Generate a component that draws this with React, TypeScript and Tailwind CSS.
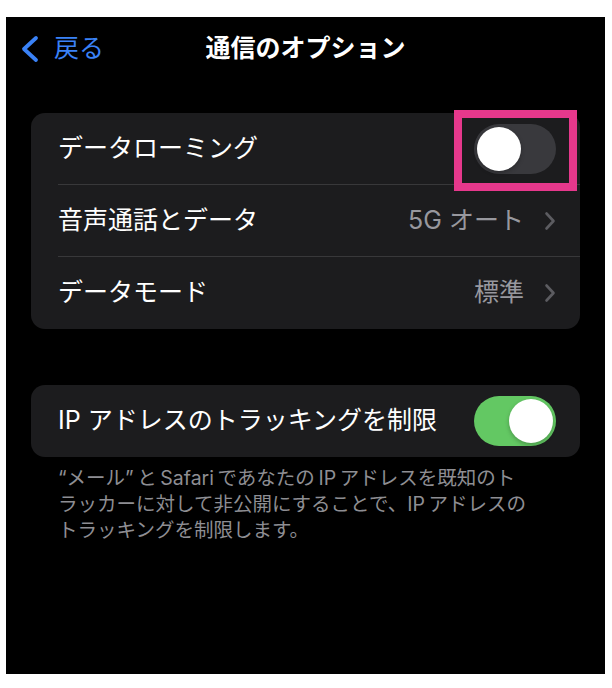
import type { ReactNode } from 'react';

const font = { fontFamily: '"Inter", "Noto Sans CJK JP", sans-serif' };

function Toggle({ on }: { on: boolean }) {
  return (
    <span
      className={`flex h-[50px] w-[82px] items-center rounded-full p-[3px] ${
        on ? 'justify-end bg-[#63c863]' : 'justify-start bg-[#39393d]'
      }`}
    >
      <span className="h-[44px] w-[44px] rounded-full bg-white shadow-[0_2px_4px_rgba(0,0,0,0.25)]" />
    </span>
  );
}

function Chevron() {
  return (
    <svg width="12" height="20" viewBox="0 0 12 20" className="ml-[20px]">
      <path d="M2.5 2.5 L9.5 10 L2.5 17.5" fill="none" stroke="#5c5c61" strokeWidth="2.6" strokeLinecap="round" strokeLinejoin="round" />
    </svg>
  );
}

function Row({ label, right, last }: { label: string; right?: ReactNode; last?: boolean }) {
  return (
    <div className="pl-[27px]">
      <div
        className={`flex h-[72px] items-center justify-between pr-[24px] ${
          last ? '' : 'border-b border-[#38383a]'
        }`}
      >
        <span className="text-[25px] text-white">{label}</span>
        {right}
      </div>
    </div>
  );
}

export default function App() {
  return (
    <div className="min-h-[688px] bg-white pl-[6px] pt-[17px]" style={font}>
      <div className="h-[657px] w-[599px] bg-black">
        <header className="grid h-[64px] grid-cols-[1fr_auto_1fr] items-center">
          <div className="flex items-center pl-[14px] text-[#3a82f7]">
            <svg width="20" height="28" viewBox="0 0 20 28">
              <path d="M16 3 L4 14 L16 25" fill="none" stroke="#3a82f7" strokeWidth="3.8" strokeLinecap="round" strokeLinejoin="round" />
            </svg>
            <span className="ml-[14px] text-[25px]">戻る</span>
          </div>
          <h1 className="text-[25px] font-semibold text-white">通信のオプション</h1>
          <div />
        </header>

        <section className="mx-[25px] mt-[32px] rounded-[14px] bg-[#1c1c1e]">
          <Row
            label="データローミング"
            right={
              <span className="relative flex">
                <Toggle on={false} />
                <span className="absolute -bottom-[17px] -left-[20px] -right-[21px] -top-[14px] border-[8px] border-[#e6388c]" />
              </span>
            }
          />
          <Row
            label="音声通話とデータ"
            right={
              <span className="flex items-center text-[25px] text-[#98989e]">
                5G オート
                <Chevron />
              </span>
            }
          />
          <Row
            label="データモード"
            last
            right={
              <span className="flex items-center text-[25px] text-[#98989e]">
                標準
                <Chevron />
              </span>
            }
          />
        </section>

        <section className="mx-[25px] mt-[56px] rounded-[14px] bg-[#1c1c1e]">
          <Row label="IP アドレスのトラッキングを制限" last right={<Toggle on />} />
        </section>

        <p className="mx-[25px] mt-[8px] pl-[27px] text-[19.5px] leading-[26px] text-[#8e8e93]">
          “メール”{'\u2009'}と{'\u2009'}Safari{'\u2009'}であなたの{'\u2009'}IP{'\u2009'}アドレスを既知のト
          <br />
          ラッカーに対して非公開にすることで、IP{'\u2009'}アドレスの
          <br />
          トラッキングを制限します。
        </p>
      </div>
    </div>
  );
}
